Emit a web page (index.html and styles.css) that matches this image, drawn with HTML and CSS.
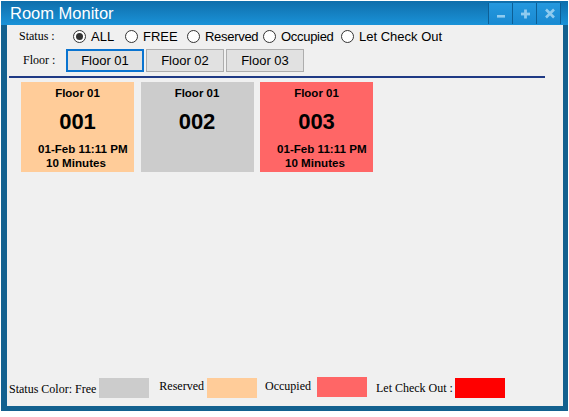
FILE: index.html
```html
<!DOCTYPE html>
<html>
<head>
<meta charset="utf-8">
<link rel="stylesheet" href="styles.css">
</head>
<body>
<div class="window">
  <div class="titlebar">
    <span class="title">Room Monitor</span>
    <div class="ctrls">
      <span class="cbtn"><svg width="23" height="21" viewBox="0 0 23 21"><rect x="8" y="12" width="8" height="2.6" fill="#8fcbef"/></svg></span>
      <span class="cbtn"><svg width="23" height="21" viewBox="0 0 23 21"><rect x="8" y="9.6" width="9" height="2.8" fill="#8fcbef"/><rect x="11.1" y="6.5" width="2.8" height="9" fill="#8fcbef"/></svg></span>
      <span class="cbtn"><svg width="23" height="21" viewBox="0 0 23 21"><path d="M9 6.5 L17 14.5 M17 6.5 L9 14.5" stroke="#8fcbef" stroke-width="2.6"/></svg></span>
    </div>
  </div>
  <div class="content">
    <div class="status-row">
      <span class="lbl lbl-status">Status :</span>
      <label class="radio r-all"><span class="dot checked"></span>ALL</label>
      <label class="radio r-free"><span class="dot"></span>FREE</label>
      <label class="radio r-res"><span class="dot"></span>Reserved</label>
      <label class="radio r-occ"><span class="dot"></span>Occupied</label>
      <label class="radio"><span class="dot"></span>Let Check Out</label>
    </div>
    <div class="floor-row">
      <span class="lbl lbl-floor">Floor :</span>
      <button class="fbtn selected">Floor 01</button>
      <button class="fbtn">Floor 02</button>
      <button class="fbtn">Floor 03</button>
    </div>
    <div class="rule"></div>
    <div class="cards">
      <div class="card reserved">
        <div class="cf">Floor 01</div>
        <div class="cn">001</div>
        <div class="cd">01-Feb 11:11 PM</div>
        <div class="cm">10 Minutes</div>
      </div>
      <div class="card free">
        <div class="cf">Floor 01</div>
        <div class="cn">002</div>
      </div>
      <div class="card occupied">
        <div class="cf">Floor 01</div>
        <div class="cn">003</div>
        <div class="cd">01-Feb 11:11 PM</div>
        <div class="cm">10 Minutes</div>
      </div>
    </div>
    <div class="legend">
      <span class="lt lt-free">Status Color: Free</span>
      <span class="sw sw-free"></span>
      <span class="lt lt-res">Reserved</span>
      <span class="sw sw-res"></span>
      <span class="lt lt-occ">Occupied</span>
      <span class="sw sw-occ"></span>
      <span class="lt lt-lco">Let Check Out :</span>
      <span class="sw sw-lco"></span>
    </div>
  </div>
</div>
</body>
</html>
```

FILE: styles.css
```css
html, body {
  margin: 0;
  padding: 0;
  background: #ffffff;
}
body {
  width: 569px;
  height: 417px;
  overflow: hidden;
}
.window {
  margin: 1px 0 0 1px;
  width: 567px;
  height: 410px;
  background: #13618f;
  display: flex;
  flex-direction: column;
}
.titlebar {
  height: 24px;
  flex: none;
  display: flex;
  align-items: flex-start;
  background: linear-gradient(#0f6eab, #1a92d8);
}
.title {
  font-family: "Liberation Sans", Arial, sans-serif;
  font-size: 16.5px;
  color: #ffffff;
  line-height: 24px;
  margin-left: 9px;
}
.ctrls {
  margin-left: auto;
  margin-top: 2px;
  margin-right: 7px;
  display: flex;
  border-right: 1px solid #0d5f95;
}
.cbtn {
  width: 23px;
  height: 21px;
  border-left: 1px solid #0d5f95;
  background: linear-gradient(#2498de, #1a8ad2);
  display: block;
}
.cbtn svg { display: block; }
.content {
  flex: 1;
  margin: 0 5px 5px 6px;
  background: #f0f0f0;
  display: flex;
  flex-direction: column;
  min-height: 0;
}
.status-row {
  margin-top: 1px;
  height: 20px;
  padding-left: 12px;
  display: flex;
  align-items: center;
}
.lbl {
  font-family: "Liberation Serif", "Times New Roman", serif;
  font-size: 12px;
  color: #000;
}
.lbl-status { width: 54px; }
.lbl-floor { width: 43px; }
.radio {
  display: flex;
  align-items: center;
  font-family: "Liberation Sans", Arial, sans-serif;
  font-size: 13px;
  color: #000;
  white-space: nowrap;
}
.r-all { width: 52px; }
.r-free { width: 62px; }
.r-res { width: 76px; }
.r-occ { width: 78px; }
.r-res, .r-occ { letter-spacing: -0.3px; }
.dot {
  width: 11px;
  height: 11px;
  border: 1px solid #333333;
  border-radius: 50%;
  background: #ffffff;
  margin-right: 5px;
  box-sizing: content-box;
  display: flex;
  align-items: center;
  justify-content: center;
  margin-top: 1px;
}
.dot.checked::after {
  content: "";
  width: 7px;
  height: 7px;
  border-radius: 50%;
  background: #333333;
}
.floor-row {
  margin-top: 3px;
  height: 23px;
  padding-left: 16px;
  display: flex;
  align-items: center;
}
.fbtn {
  width: 78px;
  height: 23px;
  box-sizing: border-box;
  margin: 0 2px 0 0;
  padding: 0;
  border: 1px solid #adadad;
  background: #e1e1e1;
  font-family: "Liberation Sans", Arial, sans-serif;
  font-size: 13px;
  color: #000;
}
.fbtn.selected {
  border: 2px solid #0a74d0;
}
.rule {
  margin: 4px 0 0 2px;
  width: 536px;
  height: 2px;
  background: #1f3a85;
}
.cards {
  margin-top: 4px;
  padding-left: 14px;
  display: flex;
  gap: 6.5px;
  flex: 1;
  align-items: flex-start;
}
.card {
  width: 113px;
  height: 90px;
  font-family: "Liberation Sans", Arial, sans-serif;
  font-weight: bold;
  color: #000;
}
.card.reserved { background: #ffcc99; }
.card.free { background: #cccccc; }
.card.occupied { background: #ff6666; }
.cf {
  font-size: 11.5px;
  line-height: 14px;
  margin-top: 4px;
  text-align: center;
}
.cn {
  font-size: 22px;
  line-height: 26px;
  margin-top: 9px;
  text-align: center;
}
.cd {
  font-size: 11.6px;
  line-height: 14px;
  margin-top: 7px;
  padding-left: 17px;
  white-space: nowrap;
}
.cm {
  font-size: 11.6px;
  line-height: 13px;
  padding-left: 25px;
}
.legend {
  height: 20px;
  margin-bottom: 8px;
  padding-left: 2px;
  display: flex;
  align-items: flex-start;
}
.lt {
  font-family: "Liberation Serif", "Times New Roman", serif;
  font-size: 12px;
  line-height: 14px;
  color: #000;
  white-space: nowrap;
}
.sw {
  width: 50px;
  height: 20px;
}
.lt-free { margin-top: 4px; }
.sw-free { margin-left: 3px; background: #cccccc; }
.lt-res { margin-top: 1px; margin-left: 10px; }
.sw-res { margin-left: 3px; background: #ffcc99; }
.lt-occ { margin-top: 1px; margin-left: 8px; }
.sw-occ { margin-left: 6px; margin-top: -1px; background: #ff6666; }
.lt-lco { margin-top: 3px; margin-left: 9px; }
.sw-lco { margin-left: 2px; background: #ff0000; }
```
